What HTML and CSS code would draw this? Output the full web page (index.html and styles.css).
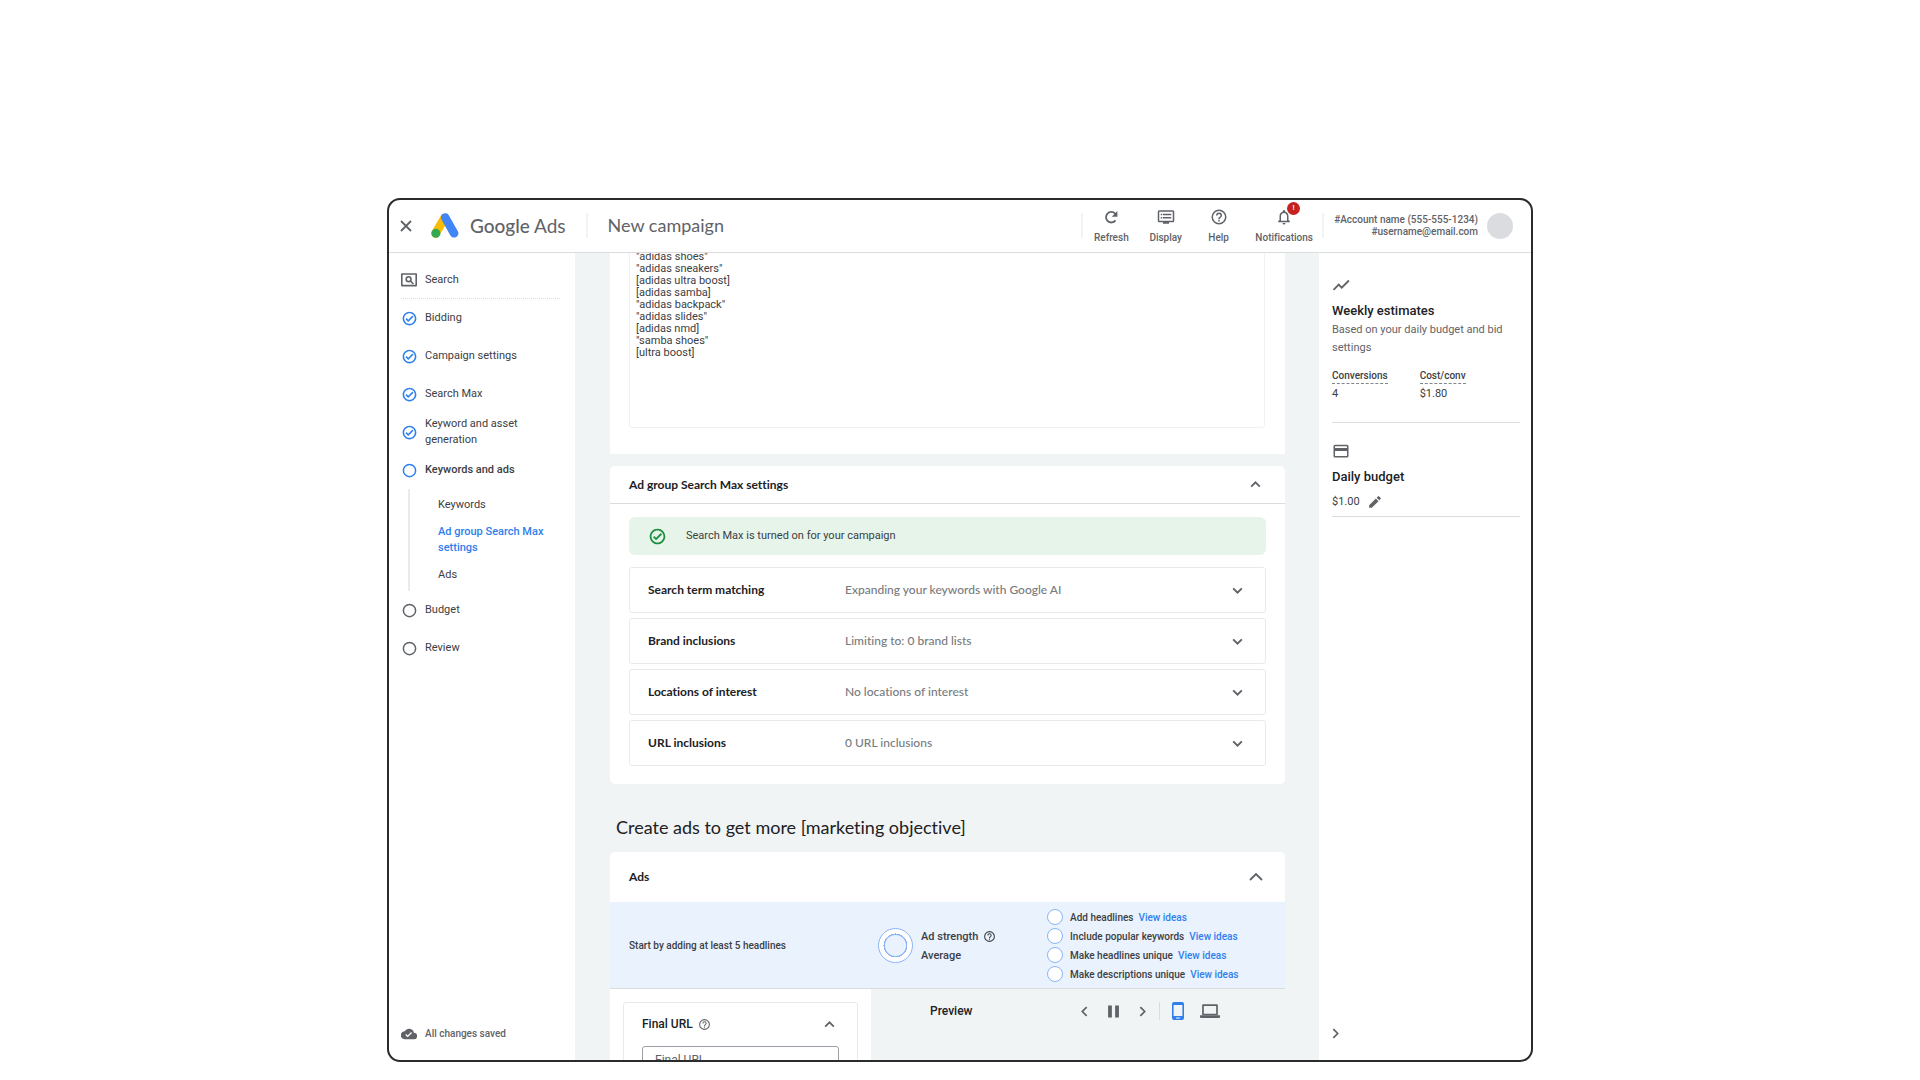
FILE: index.html
```html
<!DOCTYPE html>
<html lang="en">
<head>
  <meta charset="utf-8">
  <title>New campaign - Google Ads</title>
  <link rel="stylesheet" href="styles.css">
</head>
<body>

<!-- shared icons -->
<svg class="sprite" aria-hidden="true">
  <symbol id="i-check" viewBox="0 0 24 24"><path d="M16.600 7.200 10 13.800l-2.600-2.600L5.600 13l4.400 4.400 8.400-8.400zM12 1C5.900 1 1 5.900 1 12s4.900 11 11 11 11-4.900 11-11S18.100 1 12 1zm0 19.500c-4.700 0-8.500-3.800-8.500-8.500S7.300 3.500 12 3.500s8.500 3.800 8.500 8.500-3.800 8.500-8.500 8.500z"/></symbol>
  <symbol id="i-ring" viewBox="0 0 24 24"><circle cx="12" cy="12" r="9.800" fill="none" stroke="currentColor" stroke-width="2.400"/></symbol>
  <symbol id="i-help" viewBox="0 0 24 24"><path d="M11 18h2v-2h-2zm1-16a10 10 0 1 0 0 20 10 10 0 0 0 0-20zm0 18a8 8 0 1 1 0-16 8 8 0 0 1 0 16zm0-14a4 4 0 0 0-4 4h2a2 2 0 1 1 4 0c0 2-3 1.750-3 5h2c0-2.250 3-2.500 3-5a4 4 0 0 0-4-4z"/></symbol>
  <symbol id="i-down" viewBox="0 0 12 12"><path d="M2 4l4 4 4-4" fill="none" stroke="currentColor" stroke-width="1.800"/></symbol>
  <symbol id="i-up" viewBox="0 0 12 12"><path d="M2 8l4-4 4 4" fill="none" stroke="currentColor" stroke-width="1.600"/></symbol>
  <symbol id="i-right" viewBox="0 0 12 12"><path d="M4 2l4 4-4 4" fill="none" stroke="currentColor" stroke-width="1.600"/></symbol>
  <symbol id="i-left" viewBox="0 0 12 12"><path d="M8 2L4 6l4 4" fill="none" stroke="currentColor" stroke-width="1.600"/></symbol>
</svg>

<div class="window">
  <header class="topbar">
    <button class="close" aria-label="Close"><svg viewBox="0 0 12 12"><path d="M1 1l10 10M11 1L1 11" stroke="currentColor" stroke-width="1.800"/></svg></button>
    <svg class="logo" viewBox="0 0 28 25">
      <path d="M4.500 20.500L13.500 5" stroke="#fbbc04" stroke-width="8.600" stroke-linecap="round"/>
      <path d="M14.200 4.500l8.900 15.800" stroke="#4285f4" stroke-width="8.600" stroke-linecap="round"/>
      <circle cx="4.900" cy="20.200" r="4.500" fill="#34a853"/>
    </svg>
    <span class="brand"><b>Google</b> Ads</span>
    <h1 class="page-name">New campaign</h1>
    <div class="tools">
      <button><svg viewBox="0 0 24 24"><path d="M18 16.500A7 7 0 1 1 17.500 7.500l2 2" fill="none" stroke="currentColor" stroke-width="2.400"/><path d="M20.500 4v7.500H13z"/></svg>Refresh</button>
      <button><svg viewBox="0 0 24 24"><path d="M21 3H3a2 2 0 0 0-2 2v12a2 2 0 0 0 2 2h5v2h8v-2h5a2 2 0 0 0 2-2V5a2 2 0 0 0-2-2zm0 14H3V5h18zM5 7.500h2v2H5zm3 0h11v2H8zM5 12h2v2H5zm3 0h11v2H8z"/></svg>Display</button>
      <button><svg viewBox="0 0 24 24"><use href="#i-help"/></svg>Help</button>
      <button class="notify"><svg viewBox="0 0 24 24"><path d="M12 22a2 2 0 0 0 2-2h-4a2 2 0 0 0 2 2zm6-6v-5c0-3.100-1.600-5.600-4.500-6.300V4a1.500 1.500 0 0 0-3 0v.700C7.600 5.400 6 7.900 6 11v5l-2 2v1h16v-1zm-2 1H8v-6c0-2.500 1.500-4.500 4-4.500s4 2 4 4.500z"/></svg>Notifications<span class="badge">!</span></button>
    </div>
    <div class="account">#Account name (555-555-1234)<br>#username@email.com</div>
    <span class="avatar"></span>
  </header>

  <div class="columns">
    <nav class="sidebar">
      <a class="search" href="#"><svg viewBox="2 1 20 18"><path d="M3 2.500h18v14.500H3z" fill="none" stroke="currentColor" stroke-width="2" stroke-linejoin="round"/><circle cx="11.500" cy="9" r="3" fill="none" stroke="currentColor" stroke-width="2"/><path d="M13.500 11l4 4" stroke="currentColor" stroke-width="2"/></svg>Search</a>
      <a class="done" href="#"><svg><use href="#i-check"/></svg>Bidding</a>
      <a class="done" href="#"><svg><use href="#i-check"/></svg>Campaign settings</a>
      <a class="done" href="#"><svg><use href="#i-check"/></svg>Search Max</a>
      <a class="done" href="#"><svg><use href="#i-check"/></svg>Keyword and asset generation</a>
      <a class="done current" href="#"><svg><use href="#i-ring"/></svg>Keywords and ads</a>
      <div class="substeps">
        <a href="#">Keywords</a>
        <a class="active" href="#">Ad group Search Max settings</a>
        <a href="#">Ads</a>
      </div>
      <a href="#"><svg><use href="#i-ring"/></svg>Budget</a>
      <a href="#"><svg><use href="#i-ring"/></svg>Review</a>
      <p class="saved"><svg viewBox="0 0 24 24"><path d="M19.400 10A7.500 7.500 0 0 0 5.400 8 6 6 0 0 0 6 20h13a5 5 0 0 0 .400-10zM10 17l-3.500-3.500 1.400-1.400L10 14.200l5.200-5.200 1.400 1.400z"/></svg>All changes saved</p>
    </nav>

    <main>
      <section class="card keywords">
        <textarea aria-label="Keywords" spellcheck="false">
"adidas shoes"
"adidas sneakers"
[adidas ultra boost]
[adidas samba]
"adidas backpack"
"adidas slides"
[adidas nmd]
"samba shoes"
[ultra boost]</textarea>
      </section>

      <section class="card settings">
        <button class="card-head">Ad group Search Max settings<svg><use href="#i-up"/></svg></button>
        <div class="settings-body">
          <p class="notice"><svg><use href="#i-check"/></svg>Search Max is turned on for your campaign</p>
          <button class="row"><b>Search term matching</b><span>Expanding your keywords with Google AI</span><svg><use href="#i-down"/></svg></button>
          <button class="row"><b>Brand inclusions</b><span>Limiting to: 0 brand lists</span><svg><use href="#i-down"/></svg></button>
          <button class="row"><b>Locations of interest</b><span>No locations of interest</span><svg><use href="#i-down"/></svg></button>
          <button class="row"><b>URL inclusions</b><span>0 URL inclusions</span><svg><use href="#i-down"/></svg></button>
        </div>
      </section>

      <h2>Create ads to get more [marketing objective]</h2>

      <section class="card ads">
        <button class="card-head big">Ads<svg viewBox="0 0 18 18"><path d="M3 12l6-6 6 6" fill="none" stroke="currentColor" stroke-width="1.800"/></svg></button>
        <div class="strength">
          <p class="hint">Start by adding at least 5 headlines</p>
          <div class="meter">
            <span class="dial"></span>
            <p>Ad strength <svg><use href="#i-help"/></svg><br>Average</p>
          </div>
          <ul class="ideas">
            <li>Add headlines <a href="#">View ideas</a></li>
            <li>Include popular keywords <a href="#">View ideas</a></li>
            <li>Make headlines unique <a href="#">View ideas</a></li>
            <li>Make descriptions unique <a href="#">View ideas</a></li>
          </ul>
        </div>
        <div class="editor">
          <div class="form">
            <div class="field-box">
              <div class="field-head"><label for="finalUrl">Final URL</label><svg class="help"><use href="#i-help"/></svg><button aria-label="Collapse"><svg><use href="#i-up"/></svg></button></div>
              <input type="text" id="finalUrl" placeholder="Final URL">
            </div>
          </div>
          <div class="preview">
            <h3>Preview</h3>
            <div class="player">
              <button aria-label="Previous"><svg><use href="#i-left"/></svg></button>
              <button aria-label="Pause"><svg viewBox="0 0 12 12"><path d="M1 .500h3.500v11H1zM7.500 .500H11v11H7.500z"/></svg></button>
              <button aria-label="Next"><svg><use href="#i-right"/></svg></button>
              <button class="phone" aria-label="Mobile"><svg viewBox="0 0 12 18"><path d="M2 0h8a2 2 0 0 1 2 2v14a2 2 0 0 1-2 2H2a2 2 0 0 1-2-2V2a2 2 0 0 1 2-2zm-.400 3v11h8.800V3zM4 15.600v1h4v-1z" fill-rule="evenodd"/></svg></button>
              <button class="laptop" aria-label="Desktop"><svg viewBox="0 0 20 14"><path d="M3 1.200h14v9.300H3z" fill="none" stroke="currentColor" stroke-width="1.700" stroke-linejoin="round"/><path d="M0 11.200h20V13a1 1 0 0 1-1 1H1a1 1 0 0 1-1-1z"/></svg></button>
            </div>
          </div>
        </div>
      </section>
    </main>

    <aside class="estimates">
      <section>
        <svg viewBox="0 0 24 24"><path d="M2 18.500l7-7 4 4L22.500 6" fill="none" stroke="currentColor" stroke-width="2.400"/></svg>
        <h3>Weekly estimates</h3>
        <p>Based on your daily budget and bid settings</p>
        <dl>
          <div><dt>Conversions</dt><dd>4</dd></div>
          <div><dt>Cost/conv</dt><dd>$1.80</dd></div>
        </dl>
      </section>
      <section class="budget">
        <svg viewBox="0 0 24 24"><path d="M20 3.500H4a2 2 0 0 0-2 2v13a2 2 0 0 0 2 2h16a2 2 0 0 0 2-2v-13a2 2 0 0 0-2-2zm0 15H4V12h16zM20 8H4V5.500h16z"/></svg>
        <h3>Daily budget</h3>
        <div class="amount">$1.00<button aria-label="Edit budget"><svg viewBox="0 0 24 24"><path d="M2 17.500V22h4.500L18 10.500 13.500 6zM21.500 7a1.500 1.500 0 0 0 0-2.200l-2.300-2.300a1.500 1.500 0 0 0-2.200 0L14.800 4.700l4.500 4.500z"/></svg></button></div>
      </section>
      <button class="expand" aria-label="Collapse panel"><svg><use href="#i-right"/></svg></button>
    </aside>
  </div>
</div>

</body>
</html>
```
FILE: styles.css
```css
* {
  box-sizing: border-box;
}

body {
  margin: 0;
  padding: 198px 16px 18px;
  height: 100vh;
  background-color: white;
  font-family: Roboto, "Liberation Sans", sans-serif;
  font-size: 11px;
  font-variant-ligatures: none;
  line-height: 16px;
  color: #3c4043;
}

h1, h2, h3, p, ul, dl, dd {
  margin: 0;
  padding: 0;
}

a {
  color: inherit;
  text-decoration: none;
}

button {
  padding: 0;
  border: none;
  background: none;
  font: inherit;
  font-variant-ligatures: none;
  color: inherit;
  cursor: pointer;
}

svg {
  display: block;
  flex-shrink: 0;
  fill: currentColor;
}

.sprite {
  position: absolute;
  width: 0;
  height: 0;
}

.window {
  display: flex;
  flex-direction: column;
  max-width: 1146px;
  height: 100%;
  margin: 0 auto;
  border: 2px solid #2b2b2b;
  border-radius: 13px;
  overflow: hidden;
}

/* top bar */
.topbar {
  display: flex;
  align-items: center;
  flex-shrink: 0;
  height: 53px;
  padding: 0 18px 1px 11px;
  border-bottom: 1px solid #dadce0;
  color: #5f6368;
}

.close svg {
  width: 12px;
  height: 12px;
}

.logo {
  width: 28px;
  height: 25px;
  margin: 0 11px 0 19px;
  fill: none;
}

.brand, .page-name {
  font-family: Lato, sans-serif;
  font-size: 18px;
  font-weight: 400;
  line-height: 25px;
}

.brand {
  font-size: 19px;
}

.brand b {
  font-weight: 500;
}

.page-name {
  margin-left: 20px;
  padding-left: 20px;
  border-left: 2px solid #f1f3f4;
}

.tools {
  display: flex;
  justify-content: space-between;
  align-items: center;
  width: 243px;
  height: 25px;
  margin-left: auto;
  padding: 0 9px 0 11px;
  border: solid #f1f3f4;
  border-width: 0 2px;
  font-size: 10px;
  font-weight: 500;
  line-height: 12px;
}

.tools button {
  position: relative;
  display: flex;
  flex-direction: column;
  align-items: center;
  gap: 6px;
  min-width: 32px;
  padding-top: 1px;
}

.tools svg {
  width: 18px;
  height: 18px;
}

.badge {
  position: absolute;
  top: -5px;
  right: 13px;
  width: 13px;
  height: 13px;
  border-radius: 50%;
  background-color: #c5221f;
  color: white;
  font-size: 8px;
}

.account {
  width: 154px;
  font-size: 10px;
  font-weight: 500;
  line-height: 12px;
  text-align: right;
  white-space: nowrap;
}

.avatar {
  width: 26px;
  height: 26px;
  margin-left: 9px;
  border-radius: 50%;
  background-color: #dadce0;
}

.columns {
  display: grid;
  grid-template-columns: 186px 1fr 212px;
  flex: 1;
  min-height: 0;
}

/* steps on the left */
.sidebar {
  display: flex;
  flex-direction: column;
  padding: 8px 15px 18px 12px;
}

.sidebar > a, .saved {
  display: flex;
  align-items: center;
  gap: 8px;
  min-height: 38px;
  padding-right: 24px;
}

.sidebar svg {
  width: 15px;
  height: 15px;
  margin-left: 1px;
  color: #5f6368;
}

.sidebar .search {
  height: 38px;
  border-bottom: 1px dotted #dadce0;
}

.sidebar .search svg, .sidebar .saved svg {
  width: 16px;
  height: 16px;
  margin-left: 0;
}

.sidebar .done svg {
  color: #2f80ed;
}

.sidebar .current {
  font-weight: 500;
}

.substeps {
  display: flex;
  flex-direction: column;
  gap: 11px;
  margin-left: 7px;
  padding: 8px 0 8px 28px;
  border-left: 2px solid #e8eaed;
}

.substeps .active {
  color: #2f80ed;
  font-weight: 500;
}

.sidebar .saved {
  margin-top: auto;
  min-height: 16px;
  font-size: 10px;
  font-weight: 500;
  color: #5f6368;
}

/* middle column */
main {
  min-width: 0;
  padding: 0 34px 0 35px;
  background-color: #f1f4f5;
  overflow: hidden;
}

.card {
  border-radius: 5px;
  background-color: white;
}

.keywords {
  margin-top: -10px;
  padding: 0 20px 26px 19px;
  border-radius: 0;
}

textarea {
  display: block;
  width: 100%;
  height: 185px;
  padding: 7px 6px;
  border: 1px solid #eff1f2;
  border-radius: 3px;
  resize: none;
  outline: none;
  font-family: inherit;
  font-size: 11px;
  line-height: 12px;
  color: #3c4043;
}

.settings {
  margin-top: 12px;
}

.card-head {
  display: flex;
  justify-content: space-between;
  align-items: center;
  width: 100%;
  height: 38px;
  padding: 0 23px 0 19px;
  border-bottom: 1px solid #dadce0;
  font-family: Lato, sans-serif;
  font-size: 12px;
  font-weight: 700;
  color: #202124;
}

.card-head svg, .row svg, .field-head button svg, .expand svg {
  width: 13px;
  height: 13px;
  color: #5f6368;
}

.settings-body {
  display: flex;
  flex-direction: column;
  gap: 5px;
  padding: 13px 19px 18px;
}

.notice {
  display: flex;
  align-items: center;
  gap: 20px;
  height: 38px;
  margin-bottom: 7px;
  padding-left: 20px;
  border-radius: 6px;
  background-color: #e6f4ea;
}

.notice svg {
  width: 17px;
  height: 17px;
  color: #1e8e3e;
}

.row {
  display: grid;
  grid-template-columns: 197px 1fr 13px;
  align-items: center;
  height: 46px;
  padding: 0 21px 0 18px;
  border: 1px solid #e8eaed;
  border-radius: 3px;
  font-family: Lato, sans-serif;
  font-size: 12px;
  text-align: left;
  color: #777b80;
}

.row b {
  color: #202124;
}

.row span {
  font-weight: 500;
}

h2 {
  padding: 31px 6px 13px;
  font-family: Lato, sans-serif;
  font-size: 18px;
  font-weight: 400;
  line-height: 24px;
  color: #202124;
}

.card-head.big {
  height: 50px;
  border-bottom: none;
}

.big svg {
  width: 18px;
  height: 18px;
  margin-right: -3px;
}

.strength {
  display: grid;
  grid-template-columns: 249px 169px 1fr;
  align-items: center;
  height: 87px;
  padding: 1px 0 0 19px;
  border-bottom: 1px solid #dadce0;
  background-color: #eaf2fe;
}

.hint {
  font-size: 10px;
  font-weight: 500;
}

.meter {
  display: flex;
  align-items: center;
  gap: 8px;
  font-weight: 500;
  line-height: 19px;
}

.meter p svg {
  display: inline-block;
  width: 13px;
  height: 13px;
  margin-left: 2px;
  vertical-align: -3px;
}

.dial {
  width: 35px;
  height: 35px;
  border: 1px solid #8ab4f8;
  border-radius: 50%;
  background: radial-gradient(circle, #eaf2fe 10px, #8ab4f8 11px, #8ab4f8 12px, white 12px);
}

.ideas {
  list-style: none;
  font-size: 10px;
  font-weight: 500;
  line-height: 19px;
}

.ideas li {
  display: flex;
  align-items: center;
  gap: 5px;
}

.ideas li::before {
  content: "";
  width: 14px;
  height: 14px;
  margin-right: 2px;
  border: 1px solid #8ab4f8;
  border-radius: 50%;
  background-color: white;
}

.ideas a {
  color: #2f80ed;
}

.editor {
  display: grid;
  grid-template-columns: 261px 1fr;
}

.form {
  padding: 13px;
}

.field-box {
  padding: 13px 18px 20px;
  border: 1px solid #e8eaed;
  border-radius: 3px;
}

.field-head {
  display: flex;
  align-items: center;
  gap: 5px;
  margin-bottom: 14px;
  font-size: 12px;
  font-weight: 500;
  color: #202124;
}

.field-head .help {
  width: 13px;
  height: 13px;
  color: #5f6368;
}

.field-head button {
  margin-left: auto;
  margin-right: 3px;
}

.field-box input {
  width: 100%;
  height: 28px;
  padding: 0 12px;
  border: 1px solid #9aa0a6;
  border-radius: 3px;
  font-family: inherit;
  font-size: 12px;
}

.field-box input::placeholder {
  color: #5f6368;
}

.preview {
  display: flex;
  justify-content: space-between;
  align-items: flex-start;
  padding: 12px 65px 40px 59px;
  background-color: #f1f4f5;
}

.preview h3 {
  font-size: 12px;
  font-weight: 500;
  line-height: 20px;
  color: #202124;
}

.player {
  display: flex;
  align-items: center;
  gap: 16px;
  height: 20px;
  color: #5f6368;
}

.player svg {
  width: 13px;
  height: 13px;
}

.player .phone {
  padding-left: 12px;
  margin-left: -6px;
  border-left: 1px solid #dadce0;
  color: #2f80ed;
}

.player .phone svg {
  width: 12px;
  height: 18px;
}

.player .laptop svg {
  width: 20px;
  height: 14px;
}

/* estimates on the right */
.estimates {
  display: flex;
  flex-direction: column;
  padding: 23px 11px 20px 13px;
}

.estimates section {
  min-height: 147px;
  border-bottom: 1px solid #dadce0;
}

.estimates section > svg {
  width: 18px;
  height: 18px;
  color: #5f6368;
}

.estimates h3 {
  margin-top: 7px;
  font-size: 13px;
  font-weight: 500;
  line-height: 20px;
  color: #202124;
}

.estimates p {
  padding-right: 8px;
  line-height: 18px;
  color: #5f6368;
}

dl {
  display: flex;
  gap: 32px;
  padding: 11px 0 19px;
}

dt {
  margin-bottom: 2px;
  border-bottom: 1px dashed #80868b;
  font-size: 10px;
  font-weight: 500;
  line-height: 15px;
}

.estimates .budget {
  min-height: 0;
  padding: 19px 0 6px;
}

.amount {
  display: flex;
  align-items: center;
  gap: 8px;
  margin-top: 7px;
}

.amount svg {
  width: 14px;
  height: 14px;
  color: #5f6368;
}

.expand {
  margin: auto auto 0 -3px;
}
```
